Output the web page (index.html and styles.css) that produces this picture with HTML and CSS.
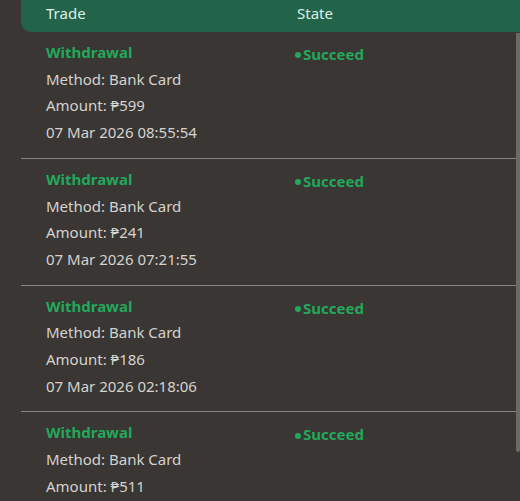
FILE: index.html
```html
<!DOCTYPE html>
<html>
<head>
<meta charset="utf-8">
<link rel="stylesheet" href="styles.css">
</head>
<body>
<div class="panel">
  <div class="head">
    <div class="col-trade">Trade</div>
    <div class="col-state">State</div>
  </div>
  <div class="list">
    <div class="row">
      <div class="col-trade">
        <div class="title">Withdrawal</div>
        <div class="line">Method: Bank Card</div>
        <div class="line">Amount: ₱599</div>
        <div class="line">07 Mar 2026 08:55:54</div>
      </div>
      <div class="col-state"><span class="state"><span class="dot"></span>Succeed</span></div>
    </div>
    <div class="row">
      <div class="col-trade">
        <div class="title">Withdrawal</div>
        <div class="line">Method: Bank Card</div>
        <div class="line">Amount: ₱241</div>
        <div class="line">07 Mar 2026 07:21:55</div>
      </div>
      <div class="col-state"><span class="state"><span class="dot"></span>Succeed</span></div>
    </div>
    <div class="row">
      <div class="col-trade">
        <div class="title">Withdrawal</div>
        <div class="line">Method: Bank Card</div>
        <div class="line">Amount: ₱186</div>
        <div class="line">07 Mar 2026 02:18:06</div>
      </div>
      <div class="col-state"><span class="state"><span class="dot"></span>Succeed</span></div>
    </div>
    <div class="row">
      <div class="col-trade">
        <div class="title">Withdrawal</div>
        <div class="line">Method: Bank Card</div>
        <div class="line">Amount: ₱511</div>
      </div>
      <div class="col-state"><span class="state"><span class="dot"></span>Succeed</span></div>
    </div>
  </div>
  <div class="scrollbar"></div>
</div>
</body>
</html>
```
FILE: styles.css
```css
html, body {
  margin: 0;
  padding: 0;
  background: #393634;
  overflow: hidden;
  height: 501px;
}
body {
  font-family: "Noto Sans", "Open Sans", sans-serif;
  font-size: 15px;
  color: #d6d2ce;
}
.panel {
  position: relative;
  padding-left: 21px;
  height: 501px;
  overflow: hidden;
}
.head {
  display: flex;
  height: 32px;
  align-items: center;
  background: #21644a;
  border-radius: 0 0 0 10px;
  color: #dfeee6;
  padding-bottom: 6px;
  box-sizing: border-box;
}
.col-trade {
  width: 276px;
  padding-left: 25px;
  box-sizing: border-box;
  flex: none;
}
.col-state {
  flex: 1;
}
.list {
  margin-right: 4px;
}
.row {
  display: flex;
  padding: 7px 0 12px;
  border-bottom: 1px solid #8a8581;
  line-height: 26.7px;
}
.title {
  font-weight: 700;
  color: #23a85b;
}
.state {
  font-weight: 700;
  color: #23a85b;
  display: inline-flex;
  align-items: center;
  margin-left: -2px;
  padding-top: 2px;
}
.dot {
  width: 6px;
  height: 6px;
  border-radius: 50%;
  background: #23a85b;
  margin-right: 2px;
  margin-top: 2px;
}
.scrollbar {
  position: absolute;
  right: 0;
  top: 33px;
  width: 4px;
  height: 419px;
  background: #6d6964;
  border-radius: 0 0 2px 2px;
}
```
